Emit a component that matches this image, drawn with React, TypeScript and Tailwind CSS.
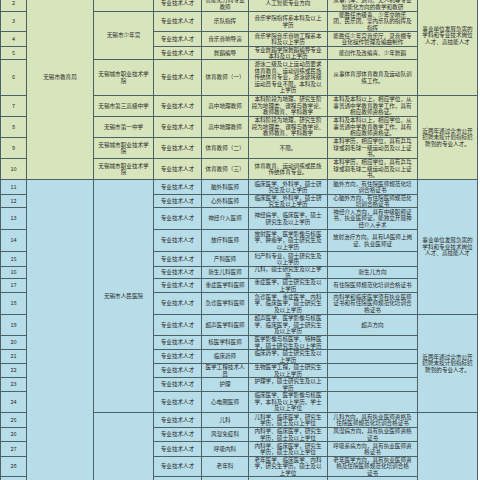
import clsx from "clsx";

type Cell = [string, number?];
interface Row {
  bg: "green" | "blue";
  cells: Cell[];
}

const spanClass: Record<number, string> = {
  1: "",
  2: "row-span-2",
  3: "row-span-3",
  4: "row-span-4",
  5: "row-span-5",
  6: "row-span-6",
  8: "row-span-8",
  10: "row-span-10",
  14: "row-span-14",
  19: "row-span-19",
};

const bgClass = {
  green: "bg-[#d8e4bc]",
  blue: "bg-[#b7dde8]",
};

const TECH = "专业技术人才";
const NEED = "事业单位发展急需的\n学科和专业技术岗位\n人才、高技能人才";
const RECENT = "近两年通过全市公开\n招聘未按计划指标招\n聘到的专业人才。";
const GEO = "本科阶段为地理，研究生阶\n段为地理类、课程与教学论、\n教师教育、学科教学";
const GEO_REQ = "本科及本科以上，相应学位，从\n事普通中学教育教学工作，具有\n相应教师资格证。";
const CITY = "无锡城市职业技术学\n院";

const rows: Row[] = [
  {
    bg: "green",
    cells: [
      ["1"],
      ["无锡市教育局", 10],
      [CITY, 2],
      [TECH],
      ["汽车专业教师"],
      ["车辆工程专业，研究生学历"],
      ["从事汽车专业教学和教研"],
      [NEED, 6],
    ],
  },
  {
    bg: "green",
    cells: [
      ["2"],
      [TECH],
      ["智能化方向专业\n教师"],
      ["人工智能专业方向"],
      ["从事汽车、通讯、无人机等专业\n智能化方向的教学和教研"],
    ],
  },
  {
    bg: "green",
    cells: [
      ["3"],
      ["无锡市少年宫", 3],
      [TECH],
      ["乐队指挥"],
      ["音乐学院指挥系本科及以上\n学历"],
      ["能胜任市级青、少年交响乐\n团、民乐团、室内乐队的指挥及\n指挥"],
    ],
  },
  {
    bg: "green",
    cells: [
      ["4"],
      [TECH],
      ["音乐音响导演"],
      ["音乐学院音乐音响工程系本\n科及以上学历"],
      ["能胜任少年宫音乐厅、录音棚专\n业化操作管理及编曲制作"],
    ],
  },
  {
    bg: "green",
    cells: [
      ["5"],
      [TECH],
      ["舞蹈编导"],
      ["专业舞蹈学院舞蹈编导专业\n本科及以上学历"],
      ["能创作及改编青、少年舞蹈"],
    ],
  },
  {
    bg: "green",
    cells: [
      ["6"],
      [CITY],
      [TECH],
      ["体育教师（一）"],
      ["游泳二级及以上运动员要求\n体育教育、运动训练或民族\n传统体育专业，游泳健将级\n运动员专业不限，本科及以\n上学历"],
      ["从事体育部体育教育及运动队训\n练工作。"],
    ],
  },
  {
    bg: "green",
    cells: [
      ["7"],
      ["无锡市第三高级中学"],
      [TECH],
      ["高中地理教师"],
      [GEO],
      [GEO_REQ],
      [RECENT, 4],
    ],
  },
  {
    bg: "green",
    cells: [["8"], ["无锡市第一中学"], [TECH], ["高中地理教师"], [GEO], [GEO_REQ]],
  },
  {
    bg: "green",
    cells: [
      ["9"],
      [CITY],
      [TECH],
      ["体育教师（二）"],
      ["不限。"],
      ["本科学历，相应学位，具有乒乓\n球或羽毛球一级运动员及以上证\n书。"],
    ],
  },
  {
    bg: "green",
    cells: [
      ["10"],
      [CITY],
      [TECH],
      ["体育教师（三）"],
      ["体育教育、运动训练或民族\n传统体育专业。"],
      ["本科学历，相应学位，具有乒乓\n球或羽毛球二级运动员及以上证\n书。"],
    ],
  },
  {
    bg: "blue",
    cells: [
      ["11"],
      ["", 19],
      ["无锡市人民医院", 14],
      [TECH],
      ["脑外科医师"],
      ["临床医学、外科学，硕士研\n究生及以上学历"],
      ["脑外方向，有住院医师规范化培\n训合格证书"],
      [NEED, 8],
    ],
  },
  {
    bg: "blue",
    cells: [
      ["12"],
      [TECH],
      ["心外科医师"],
      ["临床医学、外科学，硕士研\n究生及以上学历"],
      ["心脑外方向，有住院医师规范化\n培训合格证书"],
    ],
  },
  {
    bg: "blue",
    cells: [
      ["13"],
      [TECH],
      ["神经介入医师"],
      ["神经病学、临床医学，硕士\n研究生及以上学历"],
      ["神经介入方向，具有中级职称证\n书、执业医师证，能独立开展神\n经介入手术"],
    ],
  },
  {
    bg: "blue",
    cells: [
      ["14"],
      [TECH],
      ["放疗科医师"],
      ["放射医学、医学影像与核医\n学、肿瘤学，硕士研究生及\n以上学历"],
      ["放射治疗方向，具有LA医师上岗\n证、执业医师证"],
    ],
  },
  {
    bg: "blue",
    cells: [["15"], [TECH], ["产科医师"], ["妇产科专业，硕士研究生及\n以上学历"], [""]],
  },
  {
    bg: "blue",
    cells: [["16"], [TECH], ["新生儿科医师"], ["儿科，硕士研究生及以上学\n历"], ["新生儿方向"]],
  },
  {
    bg: "blue",
    cells: [
      ["17"],
      [TECH],
      ["重症医学科医师"],
      ["重症医学，硕士研究生及以\n上学历"],
      ["有住院医师规范化培训合格证书"],
    ],
  },
  {
    bg: "blue",
    cells: [
      ["18"],
      [TECH],
      ["急诊医学科医师"],
      ["急诊医学、重症医学、内科\n学、临床医学，硕士研究生\n及以上学历"],
      ["内科学和临床医学须有执业医师\n证书和有住院医师规范化培训合\n格证书"],
    ],
  },
  {
    bg: "blue",
    cells: [
      ["19"],
      [TECH],
      ["超声医学科医师"],
      ["超声医学、医学影像与核医\n学、临床医学，硕士研究生\n及以上学历"],
      ["超声方向"],
      [RECENT, 6],
    ],
  },
  {
    bg: "blue",
    cells: [
      ["20"],
      [TECH],
      ["核医学科医师"],
      ["医学影像与核医学、特种医\n学，硕士研究生及以上学历"],
      [""],
    ],
  },
  {
    bg: "blue",
    cells: [["21"], [TECH], ["临床药师"], ["临床药学，硕士研究生及以\n上学历"], [""]],
  },
  {
    bg: "blue",
    cells: [["22"], [TECH], ["医学工程技术人\n员"], ["生物医学工程，硕士研究生\n及以上学历"], [""]],
  },
  {
    bg: "blue",
    cells: [["23"], [TECH], ["护理"], ["护理学，硕士研究生及以上\n学历"], [""]],
  },
  {
    bg: "blue",
    cells: [
      ["24"],
      [TECH],
      ["心电图医师"],
      ["临床医学、医学影像与核医\n学，本科及以上学历，学士\n及以上学位"],
      [""],
    ],
  },
  {
    bg: "blue",
    cells: [
      ["25"],
      ["", 5],
      [TECH],
      ["儿科"],
      ["儿科学、临床医学，研究生\n学历，硕士及以上学位"],
      ["儿科方向，具有执业医师资格及\n住院医师规范化培训合格证书"],
      ["", 5],
    ],
  },
  {
    bg: "blue",
    cells: [
      ["26"],
      [TECH],
      ["风湿免疫科"],
      ["内科学、临床医学，研究生\n学历，硕士及以上学位"],
      ["风湿病方向，具有执业医师资格\n证书"],
    ],
  },
  {
    bg: "blue",
    cells: [
      ["27"],
      [TECH],
      ["呼吸内科"],
      ["内科学、临床医学，研究生\n学历，硕士及以上学位"],
      ["呼吸系病方向，具有执业医师资\n格证书"],
    ],
  },
  {
    bg: "blue",
    cells: [
      ["28"],
      [TECH],
      ["老年科"],
      ["老年医学、临床医学、内科\n学，研究生学历，硕士及以\n上学位"],
      ["老年医学方向，具有执业医师资\n格及住院医师规范化培训合格\n证书"],
    ],
  },
  {
    bg: "blue",
    cells: [
      ["29"],
      [TECH],
      ["儿科医师"],
      ["儿科学、临床医学、内科\n学，研究生学历"],
      ["儿科方向"],
    ],
  },
];

export default function App() {
  return (
    <div className="h-[480px] w-[480px] overflow-hidden bg-white">
      <div
        className={clsx(
          "-mt-[24px] grid w-[478px] border-l border-[#4d6266]",
          "grid-cols-[26px_67px_60px_48px_47px_79px_90px_60px]",
          "grid-rows-[20px_16px_20px_15px_13px_36px_21px_21px_21px_21px_15px_13px_22px_22px_15px_12px_14px_22px_21px_14px_14px_14px_14px_21px_15px_14px_15px_20px_24px]",
          "font-['Noto_Sans_CJK_SC','Noto_Sans',sans-serif] text-[5.6px] leading-[6.5px] text-[#2b2b2b]"
        )}
      >
        {rows.map((row, r) =>
          row.cells.map(([text, span = 1], c) => (
            <div
              key={`${r}-${c}`}
              className={clsx(
                "flex items-center justify-center border-r border-b border-[#4d6266] px-px text-center whitespace-pre-line",
                spanClass[span],
                bgClass[row.bg]
              )}
            >
              {text}
            </div>
          ))
        )}
      </div>
    </div>
  );
}
